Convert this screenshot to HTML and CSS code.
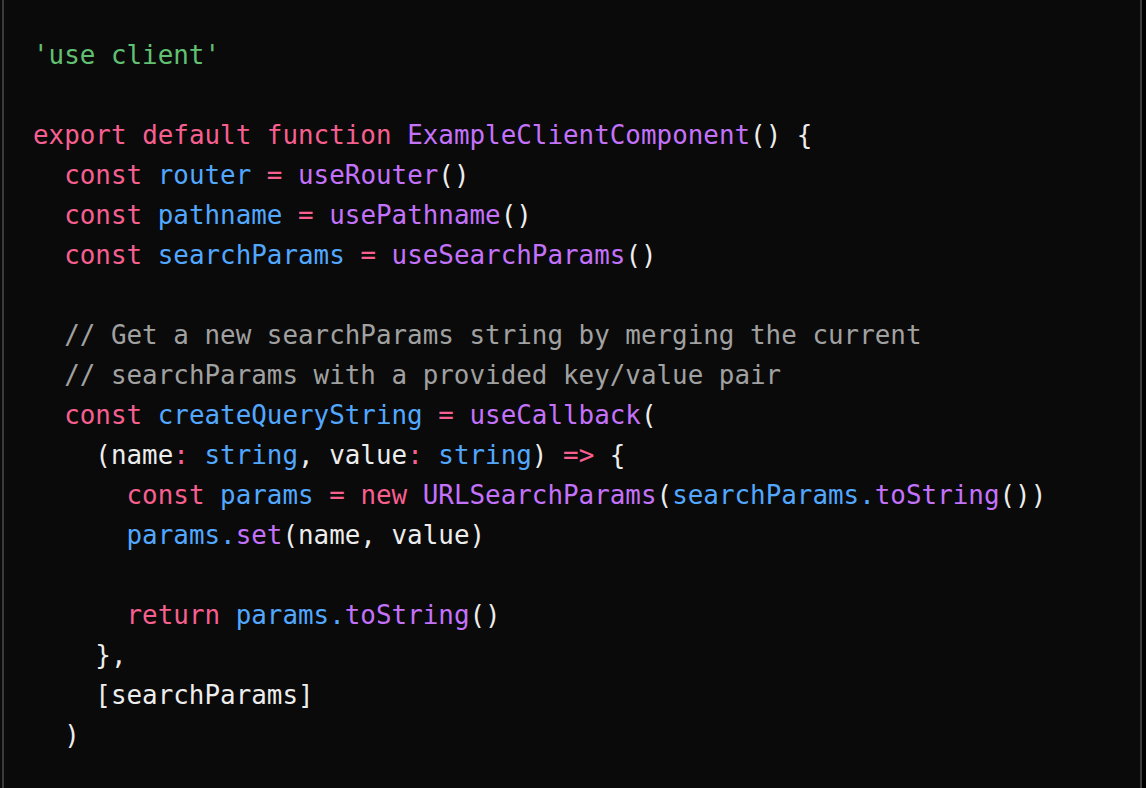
FILE: index.html
```html
<!DOCTYPE html>
<html>
<head>
<meta charset="utf-8">
<link rel="stylesheet" href="styles.css">
</head>
<body>
<div class="frame">
<pre class="code"><code><span class="line"><span class="s">'use client'</span></span>
<span class="line"> </span>
<span class="line"><span class="k">export</span> <span class="k">default</span> <span class="k">function</span> <span class="f">ExampleClientComponent</span>() {</span>
<span class="line">  <span class="k">const</span> <span class="v">router</span> <span class="k">=</span> <span class="f">useRouter</span>()</span>
<span class="line">  <span class="k">const</span> <span class="v">pathname</span> <span class="k">=</span> <span class="f">usePathname</span>()</span>
<span class="line">  <span class="k">const</span> <span class="v">searchParams</span> <span class="k">=</span> <span class="f">useSearchParams</span>()</span>
<span class="line"> </span>
<span class="line">  <span class="c">// Get a new searchParams string by merging the current</span></span>
<span class="line">  <span class="c">// searchParams with a provided key/value pair</span></span>
<span class="line">  <span class="k">const</span> <span class="v">createQueryString</span> <span class="k">=</span> <span class="f">useCallback</span>(</span>
<span class="line">    (name<span class="k">:</span> <span class="v">string</span>, value<span class="k">:</span> <span class="v">string</span>) <span class="k">=&gt;</span> {</span>
<span class="line">      <span class="k">const</span> <span class="v">params</span> <span class="k">=</span> <span class="k">new</span> <span class="f">URLSearchParams</span>(<span class="v">searchParams.</span><span class="f">toString</span>())</span>
<span class="line">      <span class="v">params.</span><span class="f">set</span>(name, value)</span>
<span class="line"> </span>
<span class="line">      <span class="k">return</span> <span class="v">params.</span><span class="f">toString</span>()</span>
<span class="line">    },</span>
<span class="line">    [searchParams]</span>
<span class="line">  )</span></code></pre>
</div>
</body>
</html>
```

FILE: styles.css
```css
html, body {
  margin: 0;
  padding: 0;
  background: #000;
  height: 100%;
  overflow: hidden;
}

.frame {
  width: 1136px;
  height: 788px;
  margin-left: 2px;
  background: #0a0a0a;
  border-left: 2px solid #3b3b3b;
  border-right: 2px solid #3b3b3b;
  box-shadow: -2px 0 0 #0a0a0a;
}

.code {
  margin: 0;
  padding: 35px 0 0 29px;
  font-family: "DejaVu Sans Mono", "Liberation Mono", monospace;
  font-size: 25.9px;
  line-height: 40px;
  color: #ededed;
  white-space: pre;
}

.k { color: #f75f8f; }
.f { color: #c472fb; }
.v { color: #52a8ff; }
.s { color: #62c073; }
.c { color: #a1a1a1; }
```
